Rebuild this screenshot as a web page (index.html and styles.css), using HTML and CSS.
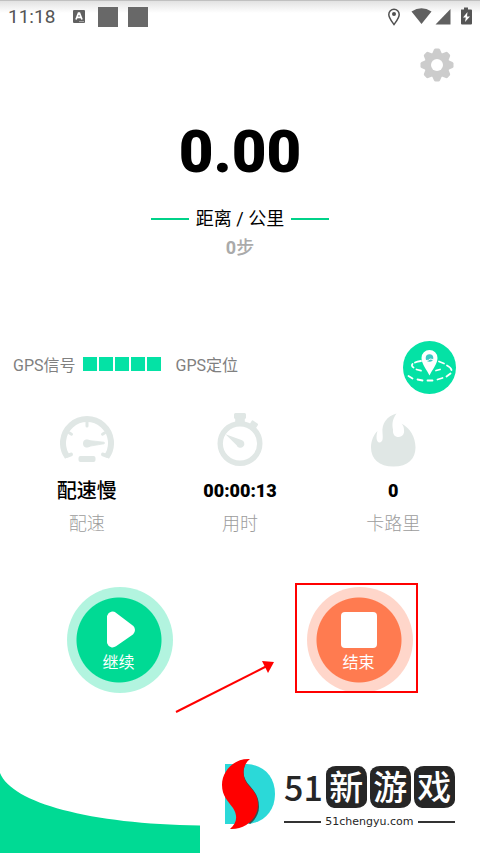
FILE: index.html
```html
<!DOCTYPE html>
<html lang="zh-CN">
<head>
<meta charset="utf-8">
<meta name="viewport" content="width=device-width, initial-scale=1">
<title>跑步</title>
<link rel="stylesheet" href="styles.css">
</head>
<body>
<header class="status">
  <span class="clock">11:18</span>
  <svg class="status-app" width="12" height="13" viewBox="0 0 12 13" aria-hidden="true"><rect width="12" height="13" rx="1" fill="#606060"/><path d="M3 9.5 5.5 3.2h1L9 9.5M4 7.4h4" fill="none" stroke="#fff" stroke-width="1.7"/><path d="M6 11.6h5" stroke="#aaa"/></svg>
  <span class="status-block"></span>
  <span class="status-block"></span>
  <svg class="status-icons" width="86" height="20" viewBox="0 0 86 20" aria-hidden="true">
    <path d="M8 17.500C5.500 14 2.800 11 2.800 7.500a5.200 5.200 0 0 1 10.400 0c0 3.500-2.700 6.500-5.200 10z" fill="none" stroke="#505050" stroke-width="1.500"/>
    <circle cx="8" cy="7" r="2" fill="#505050"/>
    <path d="M25.500 4.500Q35.500-2 45.500 4.500L35.500 17z" fill="#606060"/>
    <path d="M49.500 17.500 64.500 2V17.500z" fill="#606060"/>
    <path d="M75 2.500h3V.5h4v2h3q1 0 1 1v13q0 1-1 1h-9q-1 0-1-1z" fill="#555"/>
    <path d="M81.500 5 77 10.500h2.800l-.8 4.500L84 9.500h-3z" fill="#fff"/>
  </svg>
</header>

<div class="toolbar">
  <button class="settings" type="button" aria-label="设置">
    <svg width="34" height="34" viewBox="-17 -17 34 34" aria-hidden="true">
      <g fill="#ccc">
        <circle r="12.500"/>
        <path id="tooth" d="M-5-11-3-15.500Q-2.500-16.500-1.500-16.500h3q1 0 1.500 1L5-11z"/>
        <use href="#tooth" transform="rotate(45)"/><use href="#tooth" transform="rotate(90)"/><use href="#tooth" transform="rotate(135)"/>
        <use href="#tooth" transform="rotate(180)"/><use href="#tooth" transform="rotate(225)"/><use href="#tooth" transform="rotate(270)"/><use href="#tooth" transform="rotate(315)"/>
      </g>
      <circle r="6" fill="#fff"/>
    </svg>
  </button>
</div>

<main>
  <section class="summary">
    <div class="distance">0.00</div>
    <div class="caption"><span class="rule"></span>距离 / 公里<span class="rule"></span></div>
    <div class="steps"><b>0</b>步</div>
  </section>

  <section class="gps">
    <span>GPS信号</span>
    <span class="bars"><i></i><i></i><i></i><i></i><i></i></span>
    <span>GPS定位</span>
    <button class="map" type="button" aria-label="地图">
      <svg width="53" height="53" viewBox="0 0 53 53" aria-hidden="true">
        <circle cx="26.500" cy="26.500" r="26.500" fill="#04e2a5"/>
        <g fill="none" stroke="#fff" stroke-width="1.800" stroke-linecap="round">
          <path d="M18 20q-4 .5-6 1.500M9.500 23q-1.500 2 1 3.500M13.500 28.500l4.500 1.200M33 29.500l4-1M36 20.500l5 2M44 24.500q4 2 4.500 4.500M47.500 32.500l-4 3M39.500 37l-5 1.500M29.500 39.500h-5M19.500 39.500l-5-1M9.500 37.500l-4-2.500"/>
        </g>
        <path d="M26.500 34.500C24 29 18.500 23 18.500 17a8 8 0 0 1 16 0C34.500 23 29 29 26.500 34.500z" fill="#fff"/>
        <circle cx="26.500" cy="17" r="3.800" fill="#3cc8c4"/>
        <path d="M23 19.500q3 .2 4-1.500l3 .5" fill="none" stroke="#fff"/>
      </svg>
    </button>
  </section>

  <section class="stats">
    <div class="stat">
      <svg width="54" height="54" viewBox="0 0 54 54" aria-hidden="true" fill="none" stroke="#e0e7e5" stroke-linecap="round">
        <path d="M7.500 44A24 24 0 1 1 46.500 44" stroke-width="6" stroke-linecap="butt"/>
        <path d="M7 43 11 41.500M47 43 43 41.500" stroke-width="4"/>
        <path d="M27 9v4M9.500 20l2 1.200M44.500 20l-2 1.200" stroke-width="3"/>
        <path d="M26 27.200 44 29.200q1.500.8 0 1.600L26 33.800z" fill="#e0e7e5" stroke-width=".8"/>
        <circle cx="27" cy="30.500" r="4" fill="#e0e7e5" stroke="none"/>
        <rect x="18.500" y="43" width="17" height="6" rx="2" fill="#e0e7e5" stroke="none"/>
      </svg>
      <div class="value">配速慢</div>
      <div class="label">配速</div>
    </div>
    <div class="stat">
      <svg width="54" height="54" viewBox="0 0 54 54" aria-hidden="true" fill="#e0e7e5">
        <circle cx="27" cy="30.500" r="19.800" fill="none" stroke="#e0e7e5" stroke-width="5.400"/>
        <path d="M22.500 0h9q1.500 0 1.500 1.500v3q0 1.200-1.200 1.500v4h-9.600V6Q21 5.700 21 4.500v-3Q21 0 22.500 0z"/>
        <path d="m40 7.500 4.500 3q1 .7.300 1.700l-2.800 4.300-6-4.200 2.600-4.300q.5-1 1.400-.5z"/>
        <path d="M12.500 21.200 28.500 27A4 4 0 1 1 23.600 32.200z"/>
      </svg>
      <div class="value numeric">00:00:13</div>
      <div class="label">用时</div>
    </div>
    <div class="stat">
      <svg width="54" height="54" viewBox="0 0 54 54" aria-hidden="true">
        <path d="M30.500.5C26 7 26 11.500 27 16.500 26.500 21.500 29 24 32.500 24 37 23.500 38.500 20.500 38 17 38 14 37 12 35.500 10.500 44 15 49.500 24 49.500 34.500 49.500 46 42 53.500 27.500 53.500S5 46 5 34.500C5 28 7.500 22 11.500 18 10 22.500 10 29.500 13.500 29.500 17 29 17 25.500 16.500 20 15.500 10.500 21 3 30.500.5z" fill="#e0e7e5"/>
      </svg>
      <div class="value numeric">0</div>
      <div class="label">卡路里</div>
    </div>
  </section>

  <section class="actions">
    <div class="action">
      <button class="round go" type="button">
        <svg width="36" height="38" viewBox="0 0 36 38" aria-hidden="true"><path d="M10.500 6v25q.5 1.500 2 .5L29 20q1-1 0-2L12.500 5.500Q11 4.500 10.500 6z" fill="#fff" stroke="#fff" stroke-width="9" stroke-linejoin="round"/></svg>
        <span>继续</span>
      </button>
    </div>
    <div class="action">
      <button class="round stop" type="button">
        <svg width="36" height="38" viewBox="0 0 36 38" aria-hidden="true"><rect y="1" width="36" height="36" rx="4" fill="#fff"/></svg>
        <span>结束</span>
      </button>
      <span class="highlight"></span>
      <svg class="arrow" width="100" height="54" viewBox="0 0 100 54" aria-hidden="true"><path d="M1 52 91 6.500" stroke="#f00" stroke-width="2"/><path d="M87 1 99 2 93 13z" fill="#f00"/></svg>
    </div>
  </section>
</main>

<footer>
  <svg class="wave" width="200" height="80" viewBox="0 0 200 80" aria-hidden="true"><path d="M0 0C12 30 90 51 200 52.500V80H0z" fill="#00da94"/></svg>
  <div class="brand">
    <svg width="54" height="74" viewBox="0 0 54 74" aria-hidden="true">
      <path d="M3 7H25C42 8 53 20 53 37S42 66 25 67H3z" fill="#2bd9d8"/>
      <path d="M23 8C20 17 22 22 28 29 34 36 37 41 37 50 37 57 33 63 28 67L20 60V10z" fill="#36524f"/>
      <path d="M28 2C12 1 0 14 0 28 0 39 6 44 11 51 16 59 15 66 8 72 22 73 36 62 36 48 36 39 32 34 27 29 20 22 19 9 28 2z" fill="#f00"/>
    </svg>
    <div class="brand-text">
      <div class="brand-name"><span class="num">51</span><span class="tile">新</span><span class="tile">游</span><span class="tile">戏</span></div>
      <div class="domain">51chengyu.com</div>
    </div>
  </div>
</footer>
</body>
</html>
```
FILE: styles.css
```css
* { box-sizing: border-box; }

body {
  margin: 0;
  min-height: 100vh;
  display: flex;
  flex-direction: column;
  background: #fff;
  color: #000;
  font-family: Roboto, "Noto Sans CJK SC", sans-serif;
  overflow-x: hidden;
}

svg { display: block; flex: none; }

button {
  padding: 0;
  border: 0;
  background: none;
  font: inherit;
  cursor: pointer;
}

.status {
  display: flex;
  align-items: center;
  height: 32px;
  padding: 0 8px;
  border-top: 1px solid #c0c0c0;
  background: linear-gradient(#e2e2e2, #fff 12px);
}

.clock {
  color: #555;
  font-size: 19px;
  line-height: 32px;
}

.status-app { margin: 0 13px 0 18px; }

.status-block {
  width: 20px;
  height: 20px;
  margin-right: 10px;
  background: #686868;
}

.status-icons { margin-left: auto; }

.toolbar {
  display: flex;
  justify-content: flex-end;
  padding: 16px 26px 0;
}

.summary {
  padding-top: 40px;
  text-align: center;
}

.distance {
  font-size: 60px;
  font-weight: 900;
  line-height: 60px;
}

.caption {
  display: flex;
  align-items: center;
  justify-content: center;
  gap: 7px;
  margin-top: 25px;
  font-size: 18px;
  line-height: 24px;
}

.rule {
  width: 38px;
  height: 2px;
  background: #00d289;
}

.steps {
  margin-top: 5px;
  color: #aaa;
  font-size: 18px;
  font-weight: 500;
  line-height: 24px;
}

.gps {
  display: flex;
  align-items: center;
  margin-top: 81px;
  padding: 0 24px 0 13px;
  color: #808080;
  font-size: 16px;
  line-height: 24px;
}

.gps > span { margin-bottom: 3px; }

.gps .bars {
  display: flex;
  gap: 2px;
  margin: 0 15px 7px 7px;
}

.bars i {
  width: 14px;
  height: 14px;
  background: #04e2a5;
}

.map { margin-left: auto; }

.stats {
  display: grid;
  grid-template-columns: repeat(3, 1fr);
  margin-top: 19px;
  padding: 0 10px;
}

.stat {
  display: flex;
  flex-direction: column;
  align-items: center;
}

.value {
  margin-top: 12px;
  font-size: 20px;
  font-weight: 500;
  line-height: 24px;
}

.numeric {
  font-size: 18px;
  font-weight: 900;
}

.label {
  margin-top: 9px;
  color: #9c9c9c;
  font-size: 18px;
  font-weight: 300;
  line-height: 24px;
}

.actions {
  display: grid;
  grid-template-columns: 1fr 1fr;
  justify-items: center;
  margin-top: 51px;
}

.action { position: relative; }

.round {
  display: flex;
  flex-direction: column;
  align-items: center;
  width: 106px;
  height: 106px;
  padding: 24px 3px 0 0;
  border-radius: 50%;
  color: #fff;
  font-size: 16px;
  line-height: 24px;
}

.round span { margin-top: 2px; }

.go { background: radial-gradient(circle at 52px 53px, #00da94 42px, #b2f4df 43px); }
.stop { background: radial-gradient(circle at 52px 53px, #ff7b50 42px, #ffd6ca 43px); }

.highlight {
  position: absolute;
  top: -4px;
  left: -12px;
  width: 123px;
  height: 110px;
  border: 2px solid #f00;
  pointer-events: none;
}

.arrow {
  position: absolute;
  top: 73px;
  left: -132px;
  pointer-events: none;
}

footer {
  display: flex;
  align-items: flex-end;
  gap: 22px;
  margin-top: auto;
}

.brand {
  display: flex;
  align-items: flex-start;
  gap: 8px;
  height: 96px;
}

.brand-name {
  display: flex;
  align-items: center;
  gap: 3px;
  margin-top: 9px;
  color: #262626;
}

.num {
  font-family: "Noto Sans CJK SC", sans-serif;
  font-size: 34px;
  font-weight: 500;
  line-height: 42px;
}

.tile {
  width: 41px;
  height: 42px;
  border-radius: 10px 8px 11px 8px / 8px 11px 8px 10px;
  background: #262626;
  color: #fff;
  font-family: "Noto Sans CJK SC", sans-serif;
  font-size: 34px;
  font-weight: 500;
  line-height: 40px;
  text-align: center;
}

.domain {
  display: flex;
  align-items: center;
  gap: 4px;
  margin-top: 6px;
  color: #262626;
  font-family: "DejaVu Sans", sans-serif;
  font-size: 11px;
  line-height: 16px;
}

.domain::before,
.domain::after {
  content: "";
  flex: 1;
  height: 2px;
  background: #333;
}
```
